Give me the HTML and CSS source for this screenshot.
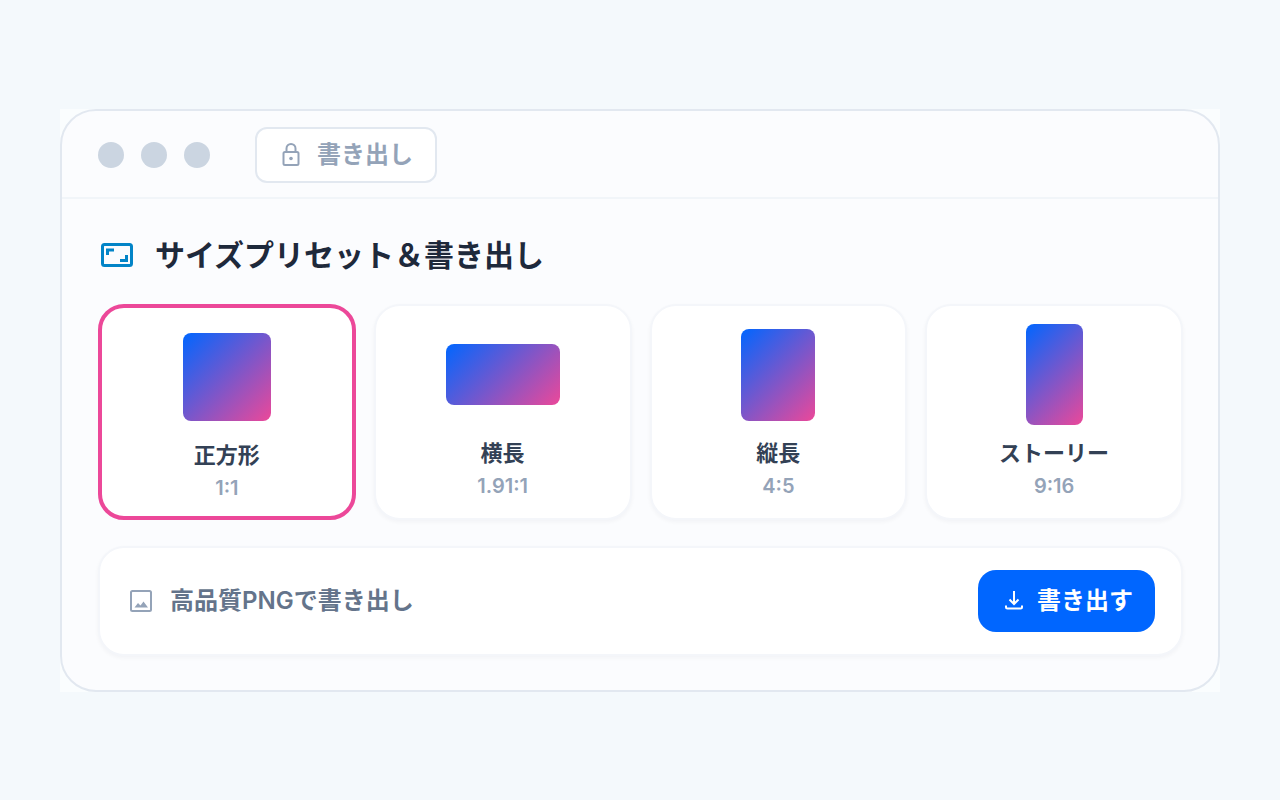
FILE: index.html
```html
<!DOCTYPE html>
<html lang="ja">
<head>
<meta charset="utf-8">
<meta name="viewport" content="width=device-width, initial-scale=1">
<title>サイズプリセット＆書き出し</title>
<link rel="stylesheet" href="styles.css">
</head>
<body>
<div class="stage">
  <main class="window">
    <header class="titlebar">
      <div class="dots"><span class="dot"></span><span class="dot"></span><span class="dot"></span></div>
      <div class="tab">
        <svg class="tab-icon" viewBox="0 0 24 24" fill="none" stroke="currentColor" stroke-width="2" stroke-linejoin="round" aria-hidden="true"><rect x="4.500" y="9" width="15" height="13" rx="1.5"/><path d="M7.500 9V5.500a4.500 4.500 0 0 1 9 0V9"/><circle cx="12" cy="15.500" r="1.8" fill="currentColor" stroke="none"/></svg>
        <span>書き出し</span>
      </div>
    </header>
    <div class="content">
      <h1 class="heading">
        <svg class="heading-icon" viewBox="0 0 32 24" fill="none" stroke="currentColor" stroke-width="3" aria-hidden="true"><rect x="1.500" y="1.500" width="29" height="21" rx="2"/><path d="M6.500 12V7H13M19 17.500H25.500V12"/></svg>
        <span>サイズプリセット＆書き出し</span>
      </h1>
      <div class="presets">
        <button type="button" class="preset selected" aria-pressed="true">
          <span class="preview"><span class="swatch square"></span></span>
          <span class="name">正方形</span><span class="ratio">1:1</span>
        </button>
        <button type="button" class="preset" aria-pressed="false">
          <span class="preview"><span class="swatch landscape"></span></span>
          <span class="name">横長</span><span class="ratio">1.91:1</span>
        </button>
        <button type="button" class="preset" aria-pressed="false">
          <span class="preview"><span class="swatch portrait"></span></span>
          <span class="name">縦長</span><span class="ratio">4:5</span>
        </button>
        <button type="button" class="preset" aria-pressed="false">
          <span class="preview"><span class="swatch story"></span></span>
          <span class="name">ストーリー</span><span class="ratio">9:16</span>
        </button>
      </div>
      <div class="export-bar">
        <div class="export-info">
          <svg class="info-icon" viewBox="0 0 22 22" aria-hidden="true"><rect x="1" y="1" width="20" height="20" rx="1.500" fill="none" stroke="currentColor" stroke-width="2"/><path d="M4.500 17.500 8 13l2.500 2.500L13.500 11.500l4.500 6z" fill="currentColor"/></svg>
          <span>高品質PNGで書き出し</span>
        </div>
        <button type="button" class="export-button">
          <svg class="export-icon" viewBox="0 0 18 20" fill="none" stroke="currentColor" stroke-width="2" aria-hidden="true"><path d="M9 0v13M4.500 8.500 9 13l4.500-4.500M1 14.500V16a1.500 1.500 0 0 0 1.500 1.500h13A1.500 1.500 0 0 0 17 16v-1.500"/></svg>
          <span>書き出す</span>
        </button>
      </div>
    </div>
  </main>
</div>
</body>
</html>
```
FILE: styles.css
```css
* {
  box-sizing: border-box;
}

body {
  margin: 0;
  min-height: 100vh;
  padding: 60px;
  display: flex;
  align-items: center;
  background: #f4f9fc;
  font-family: Inter, "Noto Sans CJK JP", sans-serif;
  color: #1e293b;
}

button {
  font: inherit;
  color: inherit;
  cursor: pointer;
}

svg {
  display: block;
  flex: none;
}

.stage {
  flex: 1;
  background: #fafdfe;
}

.window {
  border: 2px solid #e2e8f0;
  border-radius: 36px;
  background: #fbfcfe;
  overflow: hidden;
}

.titlebar {
  display: flex;
  align-items: center;
  gap: 45px;
  padding: 16px 36px 14px;
  border-bottom: 2px solid #f1f5f9;
}

.dots {
  display: flex;
  gap: 17px;
}

.dot {
  width: 26px;
  height: 26px;
  border-radius: 50%;
  background: #cbd5e1;
}

.tab {
  display: flex;
  align-items: center;
  gap: 14px;
  padding: 8px 22px;
  border: 2px solid #e2e8f0;
  border-radius: 12px;
  background: #fff;
  color: #94a3b8;
  font-size: 24px;
  line-height: 36px;
  font-weight: 600;
}

.tab-icon {
  width: 24px;
  height: 24px;
}

.content {
  padding: 34px 35px 34px 36px;
}

.heading {
  display: flex;
  align-items: center;
  gap: 22px;
  margin: 0 0 27px;
  padding-left: 3px;
  font-size: 30px;
  line-height: 44px;
  font-weight: 700;
}

.heading-icon {
  width: 32px;
  height: 24px;
  color: #0284c7;
}

.presets {
  display: grid;
  grid-template-columns: repeat(4, 1fr);
  gap: 18px;
  margin-bottom: 26px;
}

.preset {
  display: flex;
  flex-direction: column;
  align-items: center;
  padding: 18px 18px 16px;
  border: 2px solid #f4f6fa;
  border-radius: 26px;
  background: #fff;
  box-shadow: 0 2px 4px rgb(15 23 42 / 4%);
}

.preset.selected {
  border: 4px solid #ec4899;
  padding-bottom: 12px;
  box-shadow: none;
}

.preview {
  display: flex;
  align-items: center;
  height: 102px;
  margin-bottom: 10px;
}

.swatch {
  border-radius: 8px;
  background: linear-gradient(135deg, #0066ff, #ec4899);
}

.square {
  width: 88px;
  height: 88px;
}

.landscape {
  width: 114px;
  height: 61px;
}

.portrait {
  width: 74px;
  height: 92px;
}

.story {
  width: 57px;
  height: 101px;
}

.name {
  color: #334155;
  font-size: 22px;
  line-height: 34px;
  font-weight: 700;
}

.ratio {
  color: #94a3b8;
  font-size: 20px;
  line-height: 32px;
  font-weight: 600;
}

.export-bar {
  display: flex;
  align-items: center;
  justify-content: space-between;
  gap: 18px;
  padding: 22px 26px;
  border: 2px solid #f4f6fa;
  border-radius: 26px;
  background: #fff;
  box-shadow: 0 2px 4px rgb(15 23 42 / 4%);
}

.export-info {
  display: flex;
  align-items: center;
  gap: 18px;
  padding-left: 4px;
  color: #64748b;
  font-size: 24px;
  line-height: 36px;
  font-weight: 600;
}

.info-icon {
  width: 22px;
  height: 22px;
  color: #94a3b8;
}

.export-button {
  display: flex;
  align-items: center;
  gap: 14px;
  padding: 13px 22px 13px 27px;
  border: 0;
  border-radius: 18px;
  background: #0066ff;
  color: #fff;
  font-size: 24px;
  line-height: 36px;
  font-weight: 700;
}

.export-icon {
  width: 18px;
  height: 20px;
}
```
